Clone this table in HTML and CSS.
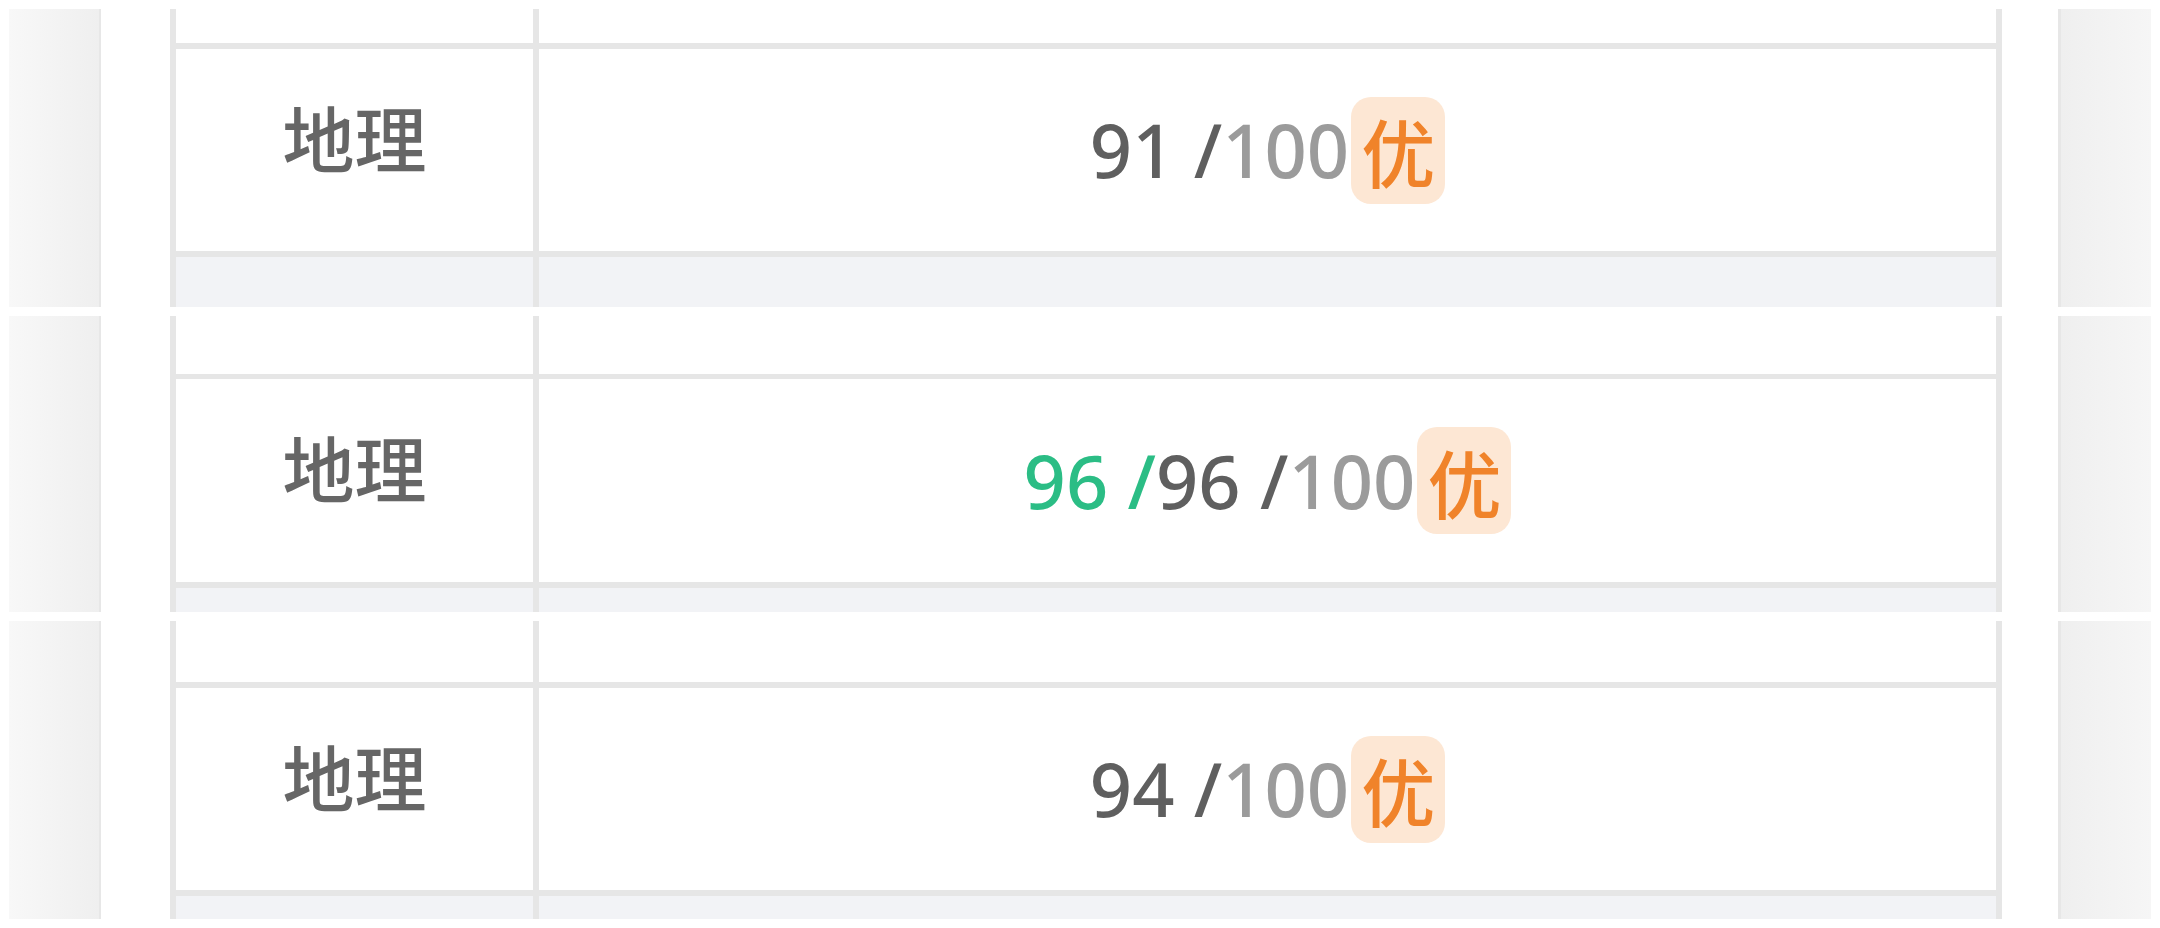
FILE: index.html
```html
<!DOCTYPE html>
<html lang="zh-CN">
  <head>
    <meta charset="UTF-8" />
    <meta name="viewport" content="width=device-width, initial-scale=1.0" />
    <title>成绩单</title>
    <link rel="stylesheet" href="styles.css">
  </head>
  <body>
    <div class="strips">
      <section class="strip strip-a">
        <div class="side side-left"></div>
        <div class="sheet">
          <div class="row row-top"><div class="cell subject"></div><div class="cell score"></div></div>
          <div class="row row-main">
            <div class="cell subject">地理</div>
            <div class="cell score">
              <span class="mine">91 /</span><span class="full">100</span><span class="grade">优</span>
            </div>
          </div>
          <div class="row row-next"><div class="cell subject"></div><div class="cell score"></div></div>
        </div>
        <div class="side side-right"></div>
      </section>

      <section class="strip strip-b">
        <div class="side side-left"></div>
        <div class="sheet">
          <div class="row row-top"><div class="cell subject"></div><div class="cell score"></div></div>
          <div class="row row-main">
            <div class="cell subject">地理</div>
            <div class="cell score">
              <span class="avg">96 /</span><span class="mine">96 /</span><span class="full">100</span><span class="grade">优</span>
            </div>
          </div>
          <div class="row row-next"><div class="cell subject"></div><div class="cell score"></div></div>
        </div>
        <div class="side side-right"></div>
      </section>

      <section class="strip strip-c">
        <div class="side side-left"></div>
        <div class="sheet">
          <div class="row row-top"><div class="cell subject"></div><div class="cell score"></div></div>
          <div class="row row-main">
            <div class="cell subject">地理</div>
            <div class="cell score">
              <span class="mine">94 /</span><span class="full">100</span><span class="grade">优</span>
            </div>
          </div>
          <div class="row row-next"><div class="cell subject"></div><div class="cell score"></div></div>
        </div>
        <div class="side side-right"></div>
      </section>
    </div>
  </body>
</html>
```

FILE: styles.css
```css
* {
  box-sizing: border-box;
}
body {
  margin: 0;
  background: #fff;
  font-family: "Noto Sans", "Noto Sans CJK SC", sans-serif;
}
.strips {
  display: flex;
  flex-direction: column;
  gap: 9px;
  padding-top: 9px;
}
.strip {
  display: flex;
  height: 298px;
}
.strip-b {
  height: 296px;
}
.side {
  flex: none;
}
.side-left {
  width: 92px;
  margin-left: 9px;
  margin-right: 69px;
  background: linear-gradient(to right, #f8f8f8, #efefef);
  border-right: 2px solid #e7e7e7;
}
.side-right {
  width: 93px;
  margin-left: 56px;
  background: linear-gradient(to right, #efefef, #f6f6f6);
  border-left: 3px solid #e7e7e7;
}
.sheet {
  width: 1832px;
  display: flex;
  flex-direction: column;
  border-left: 6px solid #e6e6e6;
  border-right: 6px solid #e6e6e6;
}
.row {
  display: flex;
}
.cell.subject {
  width: 363px;
  flex: none;
  border-right: 6px solid #e6e6e6;
}
.cell.score {
  flex: 1;
}
.row-top {
  height: 34px;
}
.strip-b .row-top {
  height: 58px;
}
.strip-c .row-top {
  height: 61px;
}
.row-main {
  height: 214px;
  border-top: 6px solid #e6e6e6;
  border-bottom: 6px solid #e6e6e6;
}
.strip-b .row-main {
  border-top-width: 5px;
}
.row-next {
  flex: 1;
  background: #f2f3f6;
}
.row-main .subject {
  display: flex;
  justify-content: center;
  padding-top: 51px;
  font-family: "Noto Sans CJK SC", sans-serif;
  font-size: 72px;
  font-weight: 500;
  line-height: 1;
  color: #666;
}
.row-main .score {
  display: flex;
  justify-content: center;
  align-items: center;
  font-size: 74px;
  font-weight: 500;
  line-height: 1;
  color: #5f5f5f;
}
.avg {
  color: #2bbd85;
}
.full {
  color: #9b9b9b;
}
.grade {
  display: flex;
  align-items: center;
  height: 107px;
  padding: 0 10px;
  margin-left: 2px;
  border-radius: 20px;
  background: #fde7d4;
  color: #f0832a;
  font-family: "Noto Sans CJK SC", sans-serif;
  font-size: 74px;
  font-weight: 500;
}
```
